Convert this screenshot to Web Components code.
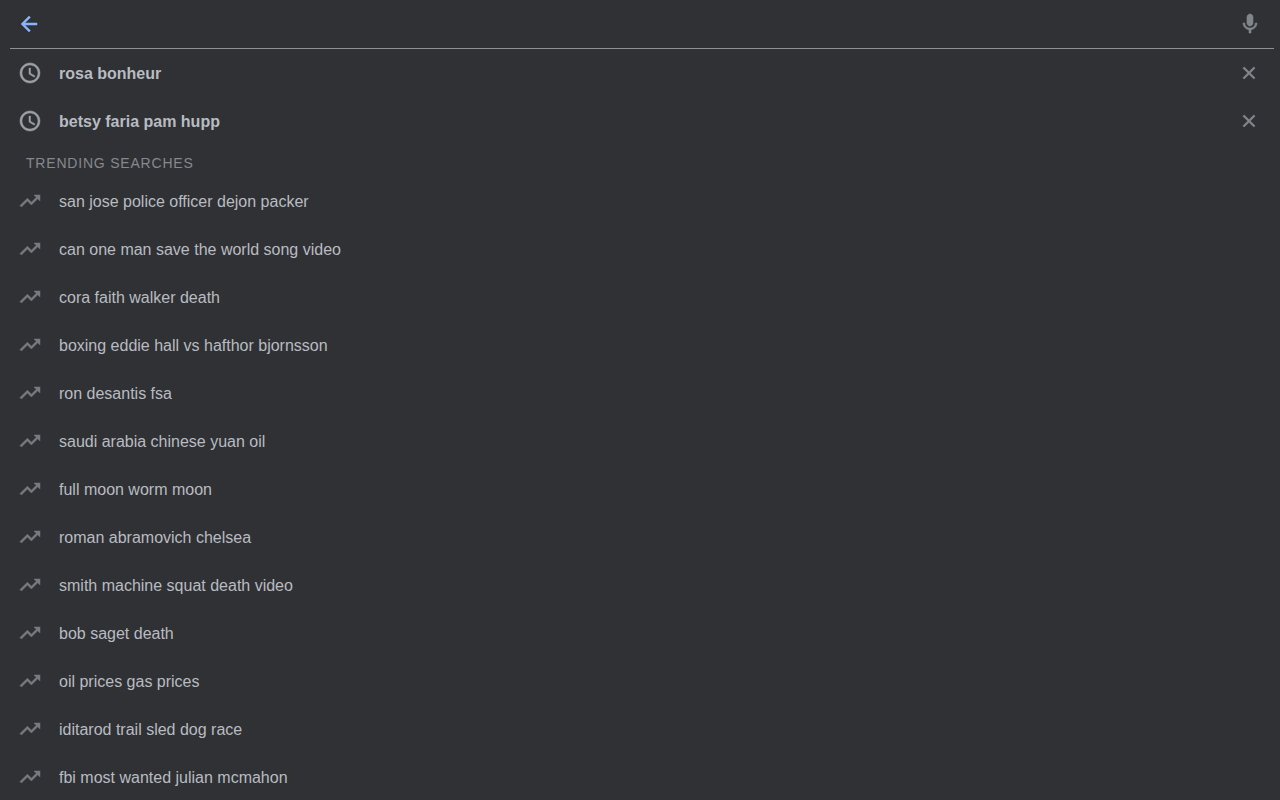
<!DOCTYPE html>
<html>
<head>
<meta charset="utf-8">
<title>Search</title>
<style>
  html, body { margin: 0; height: 800px; overflow: hidden; background: #303134; }
  body { font-family: "Liberation Sans", Arial, sans-serif; }
</style>
</head>
<body>
<search-panel>
  <search-bar></search-bar>
  <search-row kind="history" label="rosa bonheur"></search-row>
  <search-row kind="history" label="betsy faria pam hupp"></search-row>
  <section-label>TRENDING SEARCHES</section-label>
  <search-row kind="trend" label="san jose police officer dejon packer"></search-row>
  <search-row kind="trend" label="can one man save the world song video"></search-row>
  <search-row kind="trend" label="cora faith walker death"></search-row>
  <search-row kind="trend" label="boxing eddie hall vs hafthor bjornsson"></search-row>
  <search-row kind="trend" label="ron desantis fsa"></search-row>
  <search-row kind="trend" label="saudi arabia chinese yuan oil"></search-row>
  <search-row kind="trend" label="full moon worm moon"></search-row>
  <search-row kind="trend" label="roman abramovich chelsea"></search-row>
  <search-row kind="trend" label="smith machine squat death video"></search-row>
  <search-row kind="trend" label="bob saget death"></search-row>
  <search-row kind="trend" label="oil prices gas prices"></search-row>
  <search-row kind="trend" label="iditarod trail sled dog race"></search-row>
  <search-row kind="trend" label="fbi most wanted julian mcmahon"></search-row>
</search-panel>
<script>
const ICONS = {
  back: 'M20 11H7.83l5.59-5.59L12 4l-8 8 8 8 1.41-1.41L7.83 13H20v-2z',
  mic: 'M12 14c1.66 0 3-1.34 3-3V5c0-1.66-1.34-3-3-3S9 3.34 9 5v6c0 1.66 1.34 3 3 3zm5.3-3c0 3-2.54 5.1-5.3 5.1S6.7 14 6.7 11H5c0 3.41 2.72 6.23 6 6.72V21h2v-3.28c3.28-.48 6-3.3 6-6.72h-1.7z',
  history: 'M11.99 2C6.47 2 2 6.48 2 12s4.47 10 9.99 10C17.52 22 22 17.52 22 12S17.52 2 11.99 2zM12 20c-4.42 0-8-3.58-8-8s3.58-8 8-8 8 3.58 8 8-3.58 8-8 8zm.5-13H11v6l5.25 3.15.75-1.23-4.5-2.67z',
  trend: 'M16 6l2.29 2.29-4.88 4.88-4-4L2 16.59 3.41 18l6-6 4 4 6.3-6.29L22 12V6z',
  close: 'M18 7.2 16.8 6 12 10.8 7.2 6 6 7.2 10.8 12 6 16.8 7.2 18 12 13.2 16.8 18 18 16.8 13.2 12z'
};

// the reference icons read a little heavier than the bare paths, hence the thin stroke
function icon(name, color, weight = 0.35) {
  return `<svg width="24" height="24" viewBox="0 0 24 24" fill="${color}" stroke="${color}" stroke-width="${weight}"><path d="${ICONS[name]}"/></svg>`;
}

class SearchPanel extends HTMLElement {
  constructor() {
    super();
    this.attachShadow({ mode: 'open' });
    this.shadowRoot.innerHTML = `
      <style>
        :host { display: flex; flex-direction: column; height: 800px; overflow: hidden; background: #303134; }
      </style>
      <slot></slot>`;
  }
}

class SearchBar extends HTMLElement {
  constructor() {
    super();
    this.attachShadow({ mode: 'open' });
    this.shadowRoot.innerHTML = `
      <style>
        :host { display: block; flex: none; margin: 0 6px 0 10px; border-bottom: 1px solid #8e9093; }
        .bar { display: flex; align-items: center; justify-content: space-between; height: 48px; padding: 0 12px 0 7px; }
        svg { display: block; }
      </style>
      <div class="bar">${icon('back', '#8ab4f8', 0.5)}${icon('mic', '#80868b', 0.6)}</div>`;
  }
}

class SearchRow extends HTMLElement {
  connectedCallback() {
    const kind = this.getAttribute('kind');
    const isHistory = kind === 'history';
    const root = this.shadowRoot || this.attachShadow({ mode: 'open' });
    root.innerHTML = `
      <style>
        :host { display: flex; flex: none; align-items: center; height: 48px; padding: 0 19px 0 18px; }
        svg { display: block; flex: none; }
        .text { flex: 1; margin-left: 17px; padding-top: 1px; font-size: 16px; color: #b8bcc1; white-space: nowrap; }
        .history { font-weight: 700; }
      </style>
      ${icon(kind, isHistory ? '#9aa0a6' : '#777b80', 0.5)}
      <span class="text ${isHistory ? 'history' : ''}">${this.getAttribute('label')}</span>
      ${isHistory ? icon('close', '#80868b', 0.7) : ''}`;
  }
}

class SectionLabel extends HTMLElement {
  constructor() {
    super();
    this.attachShadow({ mode: 'open' });
    this.shadowRoot.innerHTML = `
      <style>
        :host { display: block; flex: none; box-sizing: border-box; height: 32px; padding: 10px 0 0 26px;
                font-size: 14px; line-height: 16px; letter-spacing: 0.8px; color: #85898e; }
      </style>
      <slot></slot>`;
  }
}

customElements.define('search-panel', SearchPanel);
customElements.define('search-bar', SearchBar);
customElements.define('search-row', SearchRow);
customElements.define('section-label', SectionLabel);
</script>
</body>
</html>
